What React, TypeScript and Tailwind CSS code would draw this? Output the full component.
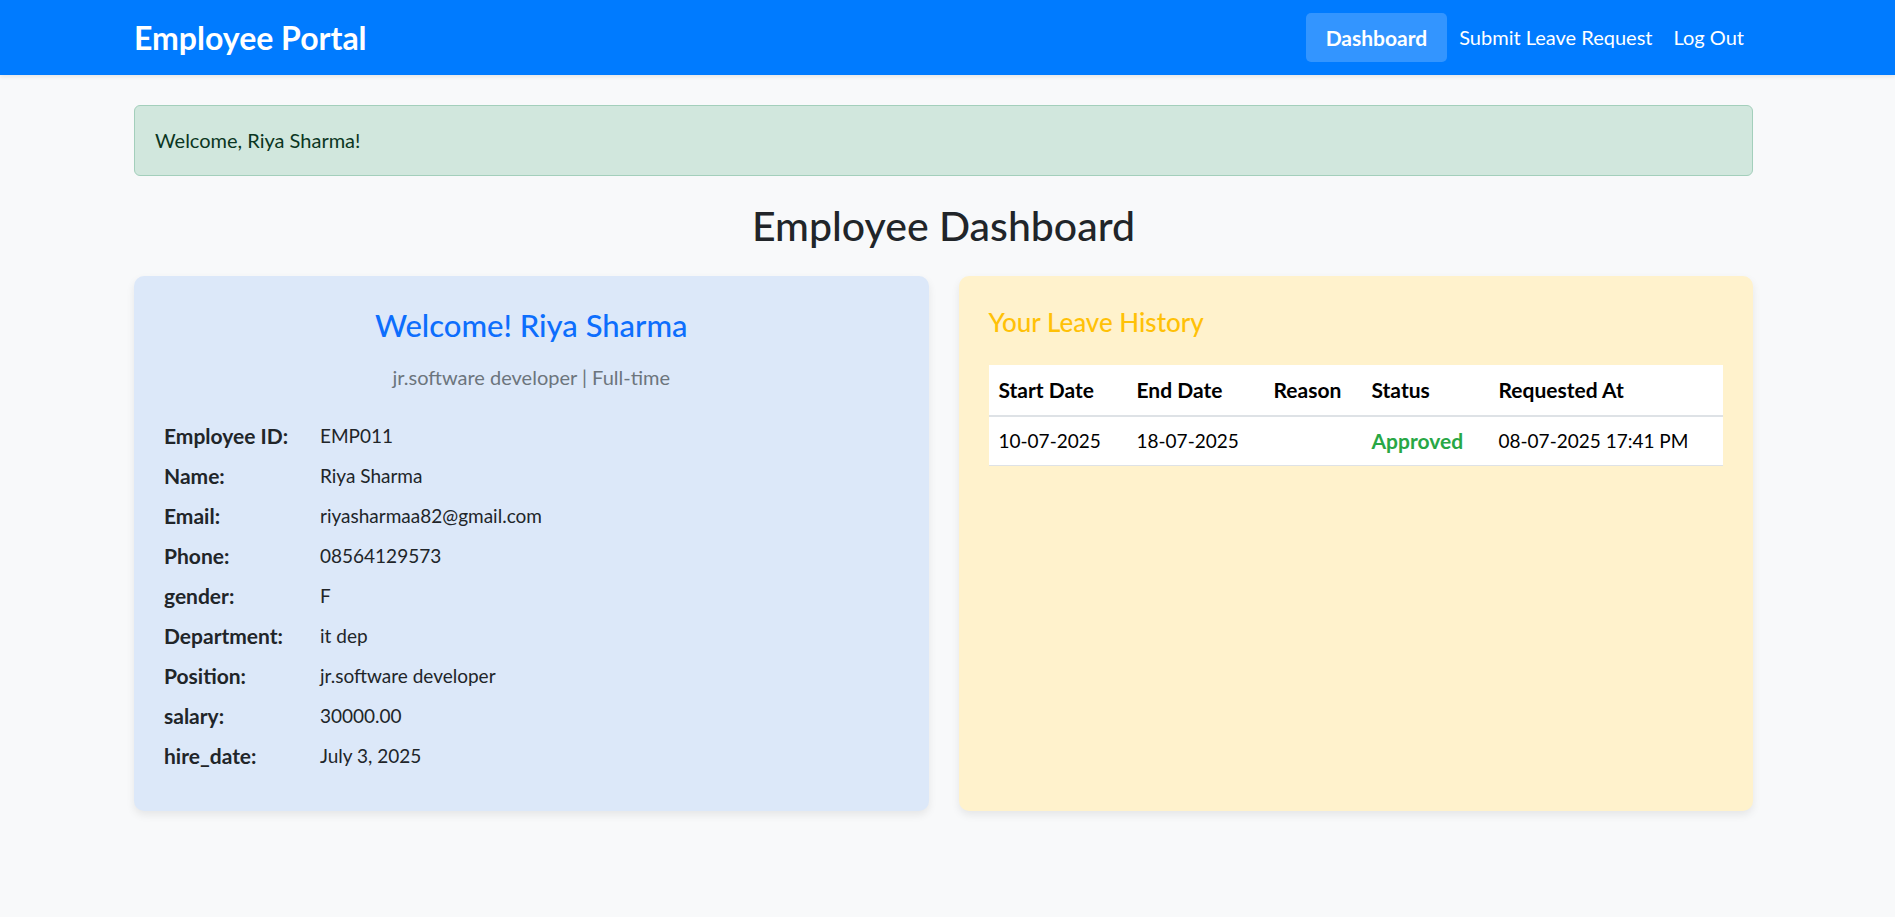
import React from "react";

const FONT = "font-['Segoe_UI','Lato','Noto_Sans',sans-serif]";

const profile: [string, string][] = [
  ["Employee ID:", "EMP011"],
  ["Name:", "Riya Sharma"],
  ["Email:", "riyasharmaa82@gmail.com"],
  ["Phone:", "08564129573"],
  ["gender:", "F"],
  ["Department:", "it dep"],
  ["Position:", "jr.software developer"],
  ["salary:", "30000.00"],
  ["hire_date:", "July 3, 2025"],
];

const leaves = [
  {
    start: "10-07-2025",
    end: "18-07-2025",
    reason: "",
    status: "Approved",
    requested: "08-07-2025 17:41 PM",
  },
];

function Navbar() {
  return (
    <nav className="h-[75px] bg-[#007bff] shadow-[0_2px_4px_rgba(0,0,0,0.08)]">
      <div className="ml-[134px] mr-[142px] flex h-full items-center justify-between">
        <a className="text-[32px] font-bold leading-none text-white">Employee Portal</a>
        <div className="mr-[9px] flex items-center text-[20px] text-white">
          <a className="rounded-[5px] bg-[#3395ff] px-[20px] py-[12px] text-[21px] font-bold leading-[25px]">
            Dashboard
          </a>
          <a className="ml-[12px] leading-[25px]">Submit Leave Request</a>
          <a className="ml-[21px] leading-[25px]">Log Out</a>
        </div>
      </div>
    </nav>
  );
}

function ProfileCard() {
  return (
    <div className="rounded-[10px] bg-[#dce8f9] px-[30px] pt-[30px] pb-[35px] shadow-[0_4px_8px_rgba(0,0,0,0.08)]">
      <h3 className="text-center text-[31px] leading-[38px] font-medium text-[#0d6efd]">
        Welcome! Riya Sharma
      </h3>
      <p className="mt-[19px] text-center text-[20px] leading-[28px] text-[#6c757d]">
        jr.software developer | Full-time
      </p>
      <div className="mt-[25px] grid grid-cols-[156px_1fr]">
        {profile.map(([k, v]) => (
          <React.Fragment key={k}>
            <div className="flex h-[40px] items-center text-[21px] font-bold text-[#212529]">{k}</div>
            <div className="flex h-[40px] items-center text-[19px] text-[#212529]">{v}</div>
          </React.Fragment>
        ))}
      </div>
    </div>
  );
}

function LeaveCard() {
  return (
    <div className="rounded-[10px] bg-[#fff2cc] p-[30px] shadow-[0_4px_8px_rgba(0,0,0,0.08)]">
      <h4 className="text-[26px] leading-[32px] font-medium text-[#ffc107]">Your Leave History</h4>
      <table className="mt-[27px] w-full table-fixed bg-white text-left text-[19px] text-black">
        <thead>
          <tr className="h-[51px] border-b-2 border-[#dee2e6] text-[21px]">
            <th className="w-[138px] pl-[10px] font-bold">Start Date</th>
            <th className="w-[137px] pl-[10px] font-bold">End Date</th>
            <th className="w-[98px] pl-[10px] font-bold">Reason</th>
            <th className="w-[127px] pl-[10px] font-bold">Status</th>
            <th className="pl-[10px] font-bold">Requested At</th>
          </tr>
        </thead>
        <tbody>
          {leaves.map((l) => (
            <tr key={l.start} className="h-[49px] border-b border-[#dee2e6]">
              <td className="pl-[10px]">{l.start}</td>
              <td className="pl-[10px]">{l.end}</td>
              <td className="pl-[10px]">{l.reason}</td>
              <td className="pl-[10px] text-[21px] font-bold text-[#28a745]">{l.status}</td>
              <td className="pl-[10px]">{l.requested}</td>
            </tr>
          ))}
        </tbody>
      </table>
    </div>
  );
}

export default function App() {
  return (
    <div className={`min-h-screen bg-[#f8f9fa] ${FONT}`}>
      <Navbar />
      <main className="ml-[134px] mr-[142px] pt-[30px]">
        <div className="rounded-[6px] border border-[#a3cfbb] bg-[#d1e7dd] px-[20px] py-[21px] text-[20px] leading-[27px] text-[#0a3622]">
          Welcome, Riya Sharma!
        </div>
        <h1 className="mt-[24px] mb-[24px] text-center text-[41px] leading-[52px] font-medium text-[#212529]">
          Employee Dashboard
        </h1>
        <div className="grid grid-cols-2 gap-[30px]">
          <ProfileCard />
          <LeaveCard />
        </div>
      </main>
    </div>
  );
}
